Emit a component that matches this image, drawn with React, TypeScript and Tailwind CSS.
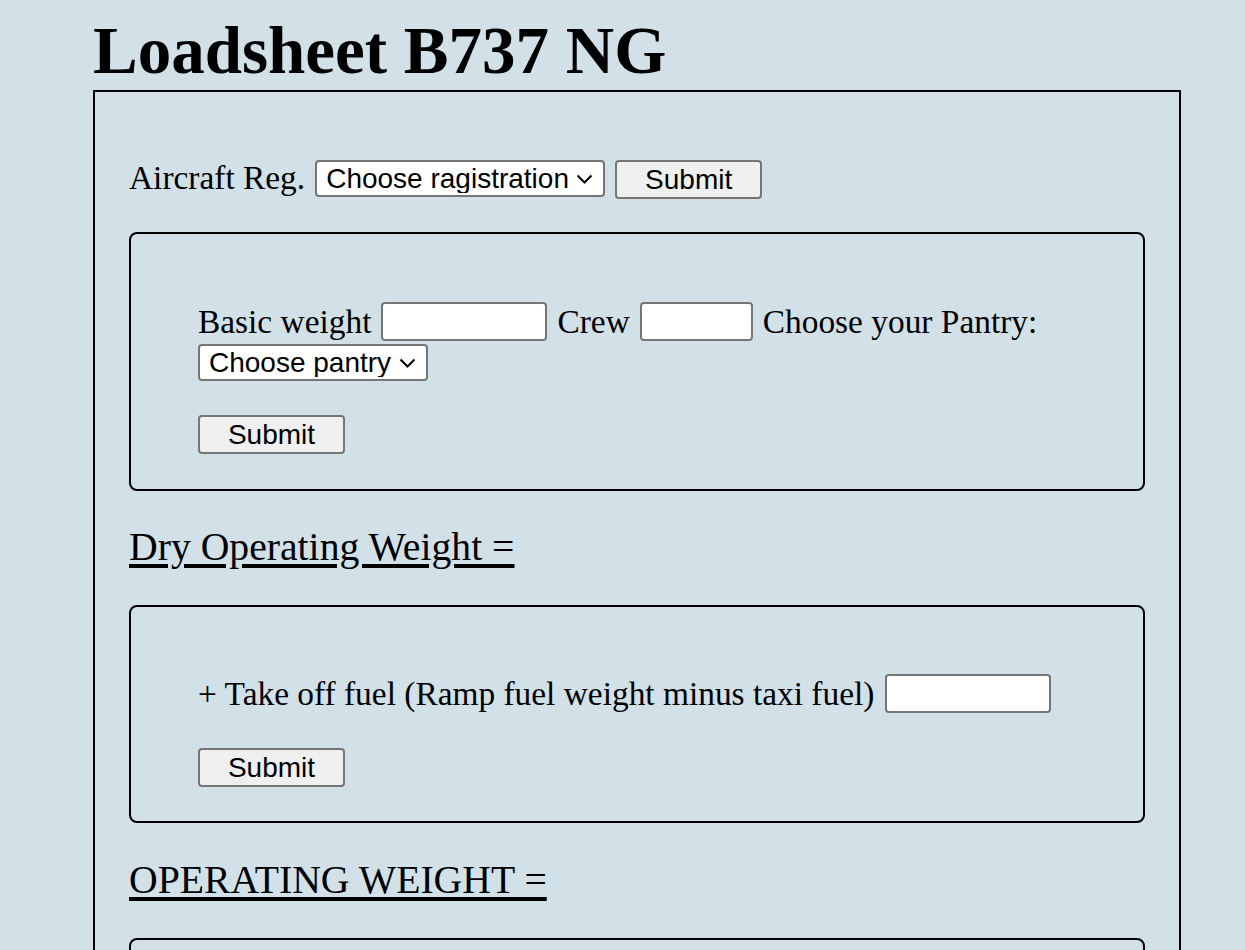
import React from "react";

const ctrl = "font-['Liberation_Sans',Arial,sans-serif] text-[28px] text-black";

function Select({ label, width }: { label: string; width: string }) {
  return (
    <div className="relative flex">
      <select
        className={`${ctrl} ${width} h-[37px] appearance-none rounded-[4px] border-2 border-[#767676] bg-white pl-[9px] leading-none outline-none`}
      >
        <option>{label}</option>
      </select>
      <svg
        className="pointer-events-none absolute right-[12px] top-[14px]"
        width="17"
        height="10"
        viewBox="0 0 17 10"
        fill="none"
      >
        <path d="M1.5 1.5l7 7 7-7" stroke="#000" strokeWidth="2" />
      </svg>
    </div>
  );
}

function Submit() {
  return (
    <button className={`${ctrl} h-[39px] w-[147px] rounded-[4px] border-2 border-[#767676] bg-[#efefef] leading-none`}>
      Submit
    </button>
  );
}

function Field({ width }: { width: string }) {
  return <input type="text" className={`${width} h-[39px] rounded-[4px] border-2 border-[#767676] bg-white px-1 ${ctrl} outline-none`} />;
}

export default function App() {
  return (
    <div className="min-h-screen bg-[#d2e0e8] pl-[93px] pr-[64px] pt-[10px] pb-10 font-['Liberation_Serif','Times_New_Roman',serif] text-black">
      <h1 className="text-[67px] font-bold leading-[80px]">Loadsheet B737 NG</h1>

      <div className="border-2 border-black px-[34px] pt-[68px] pb-10 text-[33.4px] leading-[38px]">
        <div className="flex items-start gap-x-[10px]">
          <span className="-mt-[1px]">Aircraft Reg.</span>
          <Select label="Choose ragistration" width="w-[290px]" />
          <Submit />
        </div>

        <div className="mt-[33px] rounded-[8px] border-2 border-black pt-[68px] pb-[35px] pl-[67px] pr-[67px]">
          <div className="flex flex-wrap items-center gap-x-[10px] gap-y-[3px]">
            <span>Basic weight</span>
            <Field width="w-[166px]" />
            <span>Crew</span>
            <Field width="w-[113px]" />
            <span>Choose your Pantry:</span>
            <Select label="Choose pantry" width="w-[230px]" />
          </div>
          <div className="mt-[34px] flex">
            <Submit />
          </div>
        </div>

        <h3 className="mt-[33px] mb-[35px] text-[39.7px] leading-[46px] underline decoration-[4px] underline-offset-[4px]">
          Dry Operating Weight =
        </h3>

        <div className="rounded-[8px] border-2 border-black pt-[67px] pb-[34px] pl-[67px] pr-[67px]">
          <div className="flex flex-wrap items-center gap-x-[11px]">
            <span>+ Take off fuel (Ramp fuel weight minus taxi fuel)</span>
            <Field width="w-[166px]" />
          </div>
          <div className="mt-[35px] flex">
            <Submit />
          </div>
        </div>

        <h3 className="mt-[34px] mb-[35px] text-[39.7px] leading-[46px] underline decoration-[4px] underline-offset-[4px]">
          OPERATING WEIGHT =
        </h3>

        <div className="rounded-[8px] border-2 border-black pt-[67px] pb-[33px] pl-[67px] pr-[67px]">
          <div className="flex flex-wrap items-center gap-x-[10px]">
            <span>+ Traffic load</span>
            <Field width="w-[166px]" />
          </div>
          <div className="mt-[35px] flex">
            <Submit />
          </div>
        </div>
      </div>
    </div>
  );
}
